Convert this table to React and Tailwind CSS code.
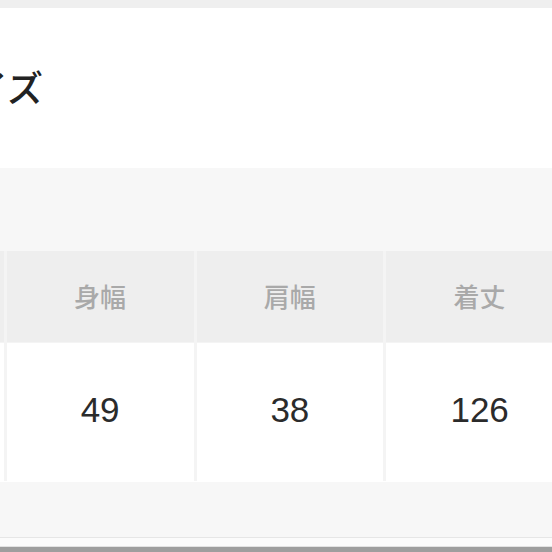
const columns = [
  { label: '', value: '' },
  { label: '身幅', value: '49' },
  { label: '肩幅', value: '38' },
  { label: '着丈', value: '126' },
];

const font = { fontFamily: '"Noto Sans CJK JP", "Noto Sans", sans-serif' };

export default function App() {
  return (
    <div className="w-[552px] h-[552px] overflow-hidden bg-[#f7f7f7] flex flex-col" style={font}>
      <div className="h-[8px] shrink-0 bg-[#efefef]" />
      <div className="h-[160px] shrink-0 bg-white flex items-center">
        <h2 className="-ml-[64px] text-[36px] font-medium leading-none text-[#222] whitespace-nowrap pb-[4px]">
          サイズ
        </h2>
      </div>
      <div className="h-[83px] shrink-0 bg-[#f7f7f7]" />
      <div className="shrink-0 -ml-[183px] w-[756px] bg-[#f4f4f4] flex flex-col gap-[1px]">
        <div className="grid grid-cols-4 gap-[3px] h-[91px]">
          {columns.map((c, i) => (
            <div key={i} className="bg-[#eeeeee] flex items-center justify-center text-[26px] font-medium text-[#a9a9a9] pb-[3px]">
              {c.label}
            </div>
          ))}
        </div>
        <div className="grid grid-cols-4 gap-[3px] h-[138px]">
          {columns.map((c, i) => (
            <div key={i} className="bg-white flex items-center justify-center text-[35px] font-['Liberation_Sans',sans-serif] text-[#2b2b2b] pb-[3px]">
              {c.value}
            </div>
          ))}
        </div>
      </div>
      <div className="h-[56px] shrink-0 bg-[#f7f7f7] border-t border-white" />
      <div className="h-[1px] shrink-0 bg-[#e6e6e6]" />
      <div className="h-[8px] shrink-0 bg-[#fbfbfb]" />
      <div className="h-[1px] shrink-0 bg-[#e2e2e2]" />
      <div className="flex-1 bg-[#9e9e9e]" />
    </div>
  );
}
